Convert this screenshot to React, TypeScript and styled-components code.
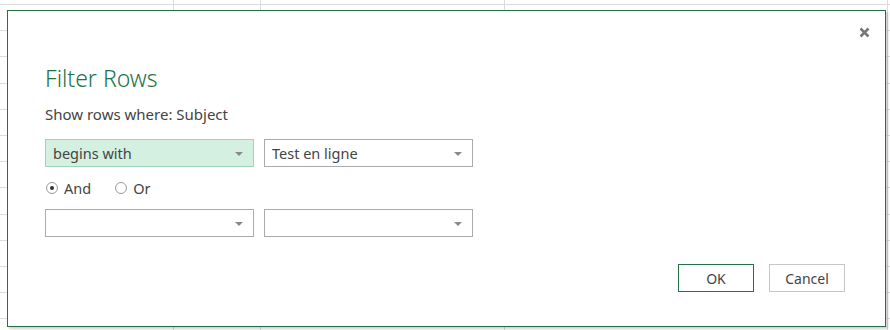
import React from "react";
import styled, { createGlobalStyle } from "styled-components";

const Global = createGlobalStyle`
  html, body { margin: 0; padding: 0; background: #fff; }
  body { font-family: "Noto Sans", "Open Sans", "Liberation Sans", sans-serif; }
  * { box-sizing: border-box; }
`;

const Sheet = styled.div`
  width: 890px;
  height: 330px;
  overflow: hidden;
  padding: 10px 0 0 7px;
  background-color: #fff;
  background-image:
    linear-gradient(to right, transparent 173px, #dcdcdc 173px, #dcdcdc 174px, transparent 174px),
    linear-gradient(to right, transparent 260px, #dcdcdc 260px, #dcdcdc 261px, transparent 261px),
    linear-gradient(to right, transparent 504px, #dcdcdc 504px, #dcdcdc 505px, transparent 505px),
    linear-gradient(to right, transparent 887px, #dcdcdc 887px, #dcdcdc 888px, transparent 888px),
    repeating-linear-gradient(to bottom, transparent 0, transparent 4px, #dcdcdc 4px, #dcdcdc 5px, transparent 5px, transparent 26.2px);
`;

const Dialog = styled.div`
  position: relative;
  width: 879px;
  height: 317px;
  background: #fff;
  border: 1px solid #217346;
  box-shadow: 2px 2px 2px rgba(0, 0, 0, 0.18);
  display: flex;
  flex-direction: column;
`;

const TitleBar = styled.div`
  height: 52px;
  display: flex;
  justify-content: flex-end;
  align-items: flex-start;
  padding: 16px 15px 0 0;
`;

const CloseButton = styled.button`
  width: 11px;
  height: 11px;
  padding: 0;
  border: 0;
  background: none;
  display: flex;
  cursor: pointer;
`;

const Content = styled.div`
  padding: 0 40px 0 37px;
  display: flex;
  flex-direction: column;
`;

const Title = styled.h1`
  margin: 0;
  font-size: 23px;
  line-height: 30px;
  font-weight: 300;
  color: #217346;
`;

const Subtitle = styled.div`
  margin-top: 11px;
  font-size: 15px;
  line-height: 20px;
  color: #444;
`;

const Row = styled.div<{ $mt: number }>`
  display: flex;
  gap: 10px;
  margin-top: ${(p) => p.$mt}px;
`;

const Select = styled.div<{ $active?: boolean }>`
  width: 209px;
  height: 28px;
  border: 1px solid ${(p) => (p.$active ? "#9fd5b7" : "#ababab")};
  background: ${(p) => (p.$active ? "#d3f0e0" : "#fff")};
  display: flex;
  align-items: center;
  justify-content: space-between;
  padding: 0 10px 0 7px;
  font-size: 14.5px;
  color: #444;
`;

const Arrow = styled.span`
  width: 0;
  height: 0;
  border-left: 4px solid transparent;
  border-right: 4px solid transparent;
  border-top: 4px solid #8a8a8a;
  margin-top: 1px;
`;

const RadioRow = styled.div`
  margin-top: 11px;
  height: 20px;
  display: flex;
  align-items: center;
  gap: 24px;
  padding-left: 1px;
`;

const RadioLabel = styled.label`
  display: flex;
  align-items: center;
  gap: 6px;
  font-size: 14.5px;
  color: #444;
`;

const RadioCircle = styled.span<{ $checked?: boolean }>`
  width: 12px;
  height: 12px;
  border-radius: 50%;
  border: 1px solid #9a9a9a;
  background: #fff;
  display: flex;
  align-items: center;
  justify-content: center;
  &::after {
    content: "";
    width: 4px;
    height: 4px;
    border-radius: 50%;
    background: ${(p) => (p.$checked ? "#333" : "transparent")};
  }
`;

const Buttons = styled.div`
  margin-top: 27px;
  display: flex;
  justify-content: flex-end;
  gap: 15px;
`;

const Button = styled.button<{ $primary?: boolean }>`
  width: 76px;
  height: 28px;
  background: #fff;
  border: 1px ${(p) => (p.$primary ? "solid #217346" : "solid #c6c6c6")};
  font-family: inherit;
  font-size: 14px;
  color: #444;
  padding: 0;
`;

export default function App() {
  return (
    <>
      <Global />
      <Sheet>
        <Dialog>
          <TitleBar>
            <CloseButton aria-label="Close">
              <svg width="11" height="11" viewBox="0 0 11 11">
                <path d="M1.5 1.5 L9.5 9.5 M9.5 1.5 L1.5 9.5" stroke="#777" strokeWidth="2.6" />
              </svg>
            </CloseButton>
          </TitleBar>
          <Content>
            <Title>Filter Rows</Title>
            <Subtitle>Show rows where: Subject</Subtitle>
            <Row $mt={15}>
              <Select $active>
                <span>begins with</span>
                <Arrow />
              </Select>
              <Select>
                <span>Test en ligne</span>
                <Arrow />
              </Select>
            </Row>
            <RadioRow>
              <RadioLabel>
                <RadioCircle $checked />
                And
              </RadioLabel>
              <RadioLabel>
                <RadioCircle />
                Or
              </RadioLabel>
            </RadioRow>
            <Row $mt={11}>
              <Select>
                <span />
                <Arrow />
              </Select>
              <Select>
                <span />
                <Arrow />
              </Select>
            </Row>
            <Buttons>
              <Button $primary>OK</Button>
              <Button>Cancel</Button>
            </Buttons>
          </Content>
        </Dialog>
      </Sheet>
    </>
  );
}
